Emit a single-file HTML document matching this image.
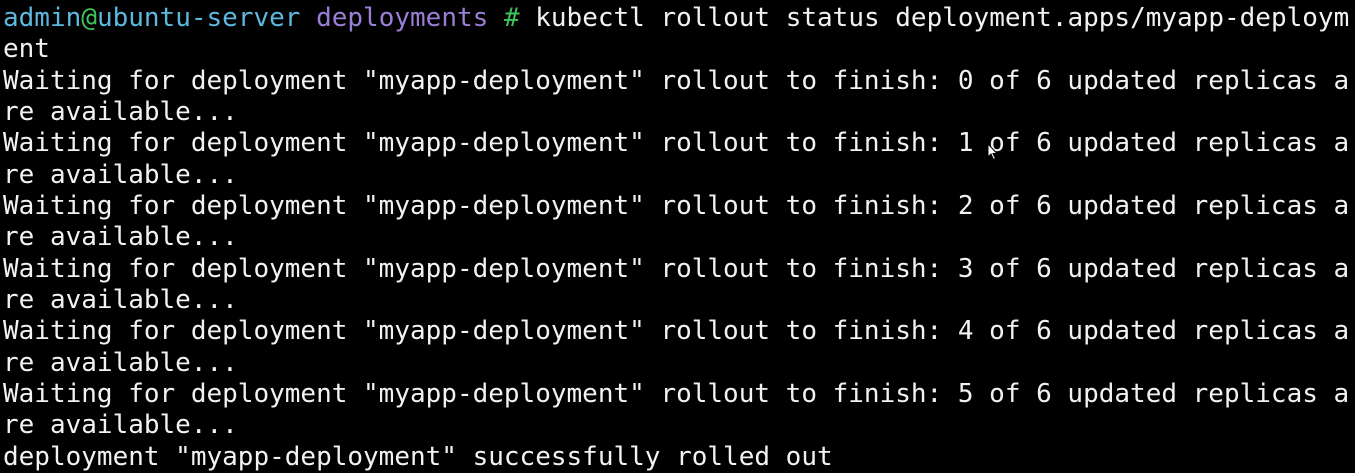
<!DOCTYPE html>
<html><head><meta charset="utf-8"><style>
html,body{margin:0;padding:0;background:#000;width:1355px;height:473px;overflow:hidden}
pre{margin:0;position:absolute;left:3px;top:3px;font-family:"DejaVu Sans Mono","Liberation Mono",monospace;font-size:26px;line-height:31.35px;color:#f2f2f2;white-space:pre}
.c{color:#5cb8df}.g{color:#3fc35b}.p{color:#9a7ed6}
</style></head><body>
<pre><span class="c">admin</span><span class="g">@</span><span class="c">ubuntu-server</span> <span class="p">deployments</span> <span class="g">#</span> kubectl rollout status deployment.apps/myapp-deploym
ent
Waiting for deployment "myapp-deployment" rollout to finish: 0 of 6 updated replicas a
re available...
Waiting for deployment "myapp-deployment" rollout to finish: 1 of 6 updated replicas a
re available...
Waiting for deployment "myapp-deployment" rollout to finish: 2 of 6 updated replicas a
re available...
Waiting for deployment "myapp-deployment" rollout to finish: 3 of 6 updated replicas a
re available...
Waiting for deployment "myapp-deployment" rollout to finish: 4 of 6 updated replicas a
re available...
Waiting for deployment "myapp-deployment" rollout to finish: 5 of 6 updated replicas a
re available...
deployment "myapp-deployment" successfully rolled out</pre>
<svg style="position:absolute;left:987px;top:143px" width="12" height="18" viewBox="0 0 12 18"><path d="M1 1 L1 14 L4 11 L6.5 16.5 L8.5 15.5 L6 10.5 L10 10.5 Z" fill="#fff" stroke="#000" stroke-width="1"/></svg>
</body></html>
